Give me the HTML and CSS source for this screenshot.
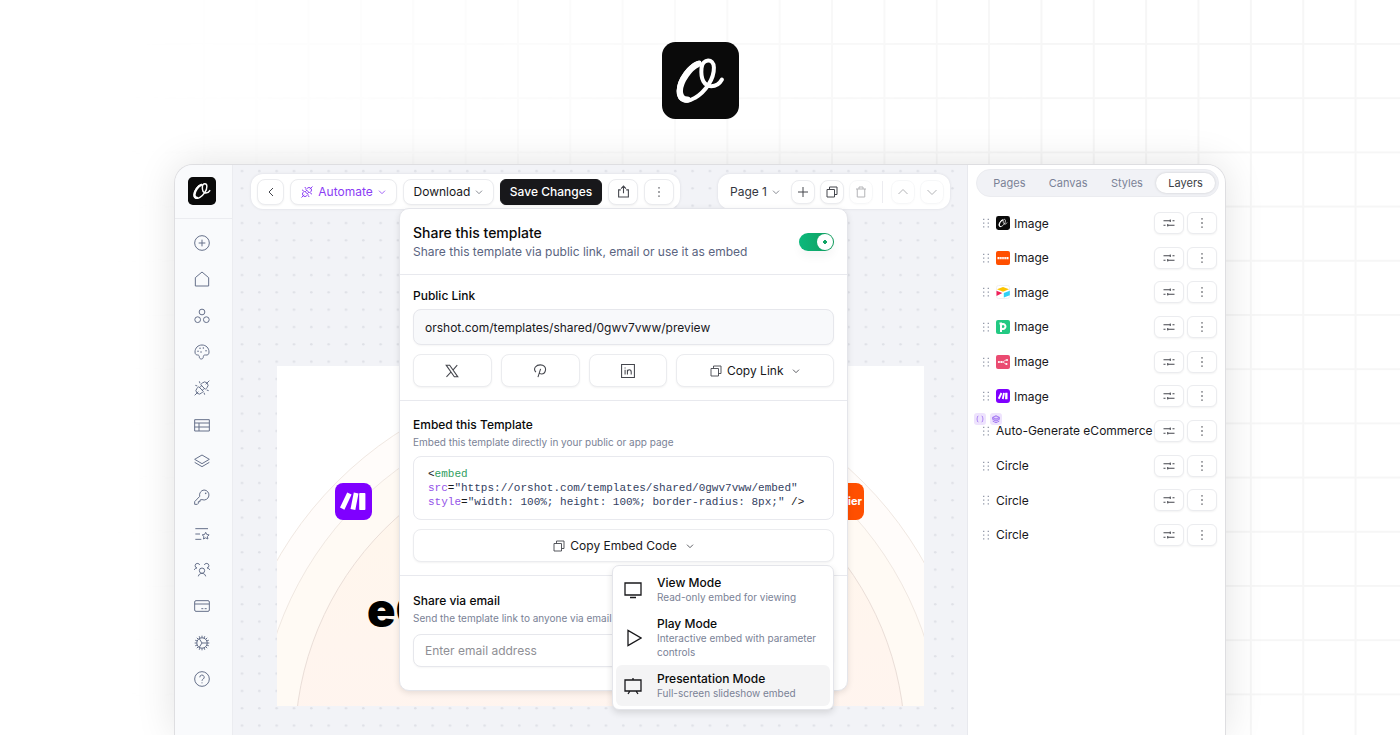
FILE: index.html
```html
<!DOCTYPE html>
<html lang="en">
<head>
    <meta charset="UTF-8">
    <meta name="viewport" content="width=device-width, initial-scale=1.0">
    <title>Orshot | Share this template</title>
    <link rel="stylesheet" href="styles.css">
</head>
<body>

    <!-- Shared icons -->
    <svg class="sprite" viewBox="0 0 24 24">
        <symbol id="orshot" viewBox="0 0 230 230">
            <rect width="230" height="230" rx="40" fill="#0a0a0a"/>
            <g fill="none" stroke="#fff" stroke-linecap="round" stroke-linejoin="round">
                <path stroke-width="12" d="M112 61C84 68 50 112 50 146C50 180 78 180 98 167C130 148 156 110 155 76C154 48 122 48 118 78C115 112 126 131 147 132C164 132 172 125 179 112"/>
                <path stroke-width="19" d="M107 66C84 76 54 115 53 146C53 164 62 172 76 172"/>
            </g>
        </symbol>
        <symbol id="make" viewBox="0 0 37 37">
            <rect width="37" height="37" rx="8" fill="#7f00ff"/>
            <path fill="#fff" d="M12.2 9.4l4.4 2.2-7.2 15.2-4.4-2.2zM18.8 9.6l4.7 1-3.2 16.4-4.8-1zM25 10h4.600a.8.8 0 0 1 .8.800v15.400a.8.8 0 0 1-.8.800H25a.8.8 0 0 1-.8-.800V10.800a.8.8 0 0 1 .8-.800z"/>
        </symbol>
        <symbol id="down" viewBox="0 0 24 24"><path d="M3 8l9 9 9-9"/></symbol>
        <symbol id="up" viewBox="0 0 24 24"><path d="M3 16l9-9 9 9"/></symbol>
        <symbol id="left" viewBox="0 0 24 24"><path d="M16 4l-8 8 8 8"/></symbol>
        <symbol id="more" viewBox="0 0 24 24"><path stroke-width="2.600" d="M12 2.500v2.600M12 10.700v2.600M12 18.900v2.600"/></symbol>
        <symbol id="plus" viewBox="0 0 24 24"><path d="M12 2v20M2 12h20"/></symbol>
        <symbol id="copy" viewBox="0 0 24 24"><path d="M2 7h15v15H2zM7 7V2h15v15h-5"/></symbol>
        <symbol id="upload" viewBox="0 0 24 24"><path d="M7 9H3v13h18V9h-4M12 15V2M7.500 6.500L12 2l4.500 4.500"/></symbol>
        <symbol id="trash" viewBox="0 0 24 24"><path d="M2 6h20M4.500 6v16h15V6M8 6V2h8v4"/></symbol>
        <symbol id="plug" viewBox="0 0 24 24"><path d="M1 23l5.500-5.500M17.500 6.500L23 1M7 10l7 7-2.500 2.500a4.900 4.900 0 0 1-7-7zM10 7l2.500-2.500a4.900 4.900 0 0 1 7 7L17 14zM8.500 11.500l3-3M12.500 15.500l3-3M8 2l1 3M2 8l3 1M22 16l-3-1M16 22l-1-3"/></symbol>
        <symbol id="sliders" viewBox="0 0 24 24"><path d="M1 7.500h14M19 7.500h4M14.500 5v5M1 16.500h4M9 16.500h14M9.500 14v5"/></symbol>
        <symbol id="grip" viewBox="0 0 24 24"><path stroke-width="3" d="M5 3h3M16 3h3M5 12h3M16 12h3M5 21h3M16 21h3"/></symbol>
        <symbol id="stack" viewBox="0 0 24 24"><path d="M12 3l11 6.500L12 16 1 9.500zM1 14l11 6.500L23 14"/></symbol>
    </svg>

    <!-- Faded grid behind the page -->
    <svg class="grid-bg">
        <defs>
            <pattern id="grid" x="674" y="43" width="52.350" height="54.200" patternUnits="userSpaceOnUse">
                <path d="M1 0V54.200M0 1H52.350" fill="none" stroke="#f6f6f6" stroke-width="2"/>
            </pattern>
        </defs>
        <rect width="100%" height="100%" fill="url(#grid)"/>
    </svg>

    <header class="brand">
        <svg class="brand-logo"><use href="#orshot"/></svg>
    </header>

    <main class="window">
        <aside class="sidebar">
            <a class="sidebar-logo" href="#" aria-label="Orshot"><svg><use href="#orshot"/></svg></a>
            <nav class="sidebar-nav">
                <a href="#" aria-label="New"><svg viewBox="0 0 24 24"><circle cx="12" cy="12" r="11"/><path d="M12 7v10M7 12h10"/></svg></a>
                <a href="#" aria-label="Home"><svg viewBox="0 0 24 24"><path d="M2 10L12 1.500 22 10v12.500H2z"/></svg></a>
                <a href="#" aria-label="Apps"><svg viewBox="0 0 24 24"><circle cx="12" cy="6" r="4.300"/><circle cx="5.500" cy="17.500" r="4.300"/><circle cx="18.500" cy="17.500" r="4.300"/></svg></a>
                <a href="#" aria-label="Brand"><svg viewBox="0 0 24 24"><path d="M12 1.500C6 1.500 1.500 6 1.500 12c0 3.500 2 4.500 4 4.500 2 0 2.500 1.500 2.500 3s1 3 3 3 3-1.500 3-3.500 1-2.500 3-2.500h2.500c2 0 3-2 3-4.500 0-6-4.500-10.500-10.500-10.500z"/><path stroke-width="2.200" stroke-linecap="round" d="M6 11h.100M9 6.500h.100M14 6h.100M18 10h.100M10.500 12h.100"/></svg></a>
                <a href="#" aria-label="Integrations"><svg><use href="#plug"/></svg></a>
                <a href="#" aria-label="Tables"><svg viewBox="0 0 24 24"><path d="M1 4h22v17H1zM1 9h22M1 15h22M7.500 9v12"/></svg></a>
                <a href="#" aria-label="Templates"><svg><use href="#stack"/></svg></a>
                <a href="#" aria-label="API keys"><svg viewBox="0 0 24 24"><path d="M15 1.500a7.500 7.500 0 1 1-3 14.400L9 16.500v2.500H6.500v2.500L5 23H1v-4l7.600-8A7.500 7.500 0 0 1 15 1.500z"/><path stroke-width="2.400" stroke-linecap="round" d="M17.500 6.500h.100"/></svg></a>
                <a href="#" aria-label="Activity"><svg viewBox="0 0 24 24"><path d="M2 4h19M2 12h7M2 20h9M17.500 9.500l1.700 3.300 3.500.5-2.600 2.500.7 3.700-3.300-1.800-3.300 1.800.7-3.700-2.600-2.500 3.500-.5z"/></svg></a>
                <a href="#" aria-label="Team"><svg viewBox="0 0 24 24"><circle cx="12" cy="13" r="4"/><path d="M6.500 21.500c1-6 10-6 11 0M.500 12c.5-2 2-3 4-3a3.500 3.500 0 1 1 4-4.500M23.500 12c-.5-2-2-3-4-3a3.500 3.500 0 1 0-4-4.500"/></svg></a>
                <a href="#" aria-label="Billing"><svg viewBox="0 0 24 24"><rect x="1" y="4" width="22" height="16" rx="2"/><path d="M1 9h22M11 16h3M16 16h3"/></svg></a>
                <a href="#" aria-label="Settings"><svg viewBox="0 0 24 24"><circle cx="12" cy="12" r="7.800"/><path d="M12 1v3.200M12 19.800V23M1 12h3.200M12 12h11M4.200 4.200l2.300 2.300M17.500 17.500l2.300 2.300M4.200 19.800l2.300-2.300M17.500 6.500l2.300-2.300M7.500 5l4.500 7-4.500 7M7.800 1.800l1.200 3M16.200 1.800l-1.200 3M7.800 22.200l1.200-3M16.200 22.200l-1.200-3M1.800 7.800l3 1.200M1.800 16.200l3-1.200M22.200 7.800l-3 1.200M22.200 16.200l-3-1.200"/></svg></a>
                <a href="#" aria-label="Help"><svg viewBox="0 0 24 24"><circle cx="12" cy="12" r="11"/><path d="M8.700 9.500a3.300 3.300 0 1 1 5 2.700c-1.200.7-1.700 1.200-1.700 2.500M12 17v1.500"/></svg></a>
            </nav>
        </aside>

        <section class="canvas">
            <svg class="dots">
                <defs>
                    <pattern id="dot" width="17.330" height="17.330" patternUnits="userSpaceOnUse">
                        <circle cx="9" cy="6" r="1.300" fill="#dfe1e7"/>
                    </pattern>
                </defs>
                <rect width="100%" height="100%" fill="url(#dot)"/>
            </svg>

            <div class="bars">
                <div class="bar">
                    <button class="btn" aria-label="Back"><svg><use href="#left"/></svg></button>
                    <button class="btn btn-automate"><svg class="icon-plug"><use href="#plug"/></svg>Automate<svg class="chevron"><use href="#down"/></svg></button>
                    <button class="btn btn-download">Download<svg class="chevron"><use href="#down"/></svg></button>
                    <button class="btn btn-dark">Save Changes</button>
                    <button class="btn btn-wide" aria-label="Share"><svg class="icon-upload"><use href="#upload"/></svg></button>
                    <button class="btn btn-wide" aria-label="More"><svg><use href="#more"/></svg></button>
                </div>
                <div class="bar bar-pages">
                    <button class="page-select">Page 1<svg class="chevron"><use href="#down"/></svg></button>
                    <button class="btn btn-small" aria-label="Add page"><svg class="icon-plug"><use href="#plus"/></svg></button>
                    <button class="btn btn-small" aria-label="Duplicate page"><svg class="icon-plug"><use href="#copy"/></svg></button>
                    <button class="btn btn-small" aria-label="Delete page" disabled><svg><use href="#trash"/></svg></button>
                    <span class="bar-line"></span>
                    <button class="btn btn-small" aria-label="Move up" disabled><svg><use href="#up"/></svg></button>
                    <button class="btn btn-small" aria-label="Move down" disabled><svg><use href="#down"/></svg></button>
                </div>
            </div>

            <svg class="artboard" viewBox="0 0 647 340" preserveAspectRatio="none">
                <defs>
                    <linearGradient id="peach" x1="0" y1="0" x2="0" y2="1">
                        <stop offset="0" stop-color="#fff7ec"/>
                        <stop offset=".5" stop-color="#fff4ef"/>
                    </linearGradient>
                </defs>
                <rect width="647" height="340" fill="#fff"/>
                <g stroke="#f0e8e2">
                    <circle cx="323" cy="379" r="372" fill="#fffcfa"/>
                    <circle cx="323" cy="379" r="342" fill="#fffaf4"/>
                    <circle cx="323" cy="379" r="305" fill="url(#peach)" stroke="#eaded8"/>
                </g>
                <use href="#make" x="58" y="117" width="37" height="37"/>
                <rect x="550" y="117" width="37" height="37" rx="8" fill="#ff4f00"/>
                <text class="art-zapier" x="585" y="139" text-anchor="end">zapier</text>
                <text class="art-title" x="90" y="261">eCommerce</text>
            </svg>

            <div class="popover">
                <div class="popover-head">
                    <div>
                        <h2>Share this template</h2>
                        <label for="share-toggle">Share this template via public link, email or use it as embed</label>
                    </div>
                    <input class="toggle" type="checkbox" id="share-toggle" checked>
                </div>

                <div class="popover-section section-link">
                    <label class="title" for="public-link">Public Link</label>
                    <input class="field field-link" type="text" id="public-link" value="orshot.com/templates/shared/0gwv7vww/preview" readonly>
                    <div class="share-row">
                        <button class="btn btn-tall" aria-label="Share on X"><svg viewBox="0 0 24 24"><path d="M2 2h6l14 20h-6zM2.500 22l8-8.500M13.500 10.500L21 2"/></svg></button>
                        <button class="btn btn-tall" aria-label="Share on Pinterest"><svg viewBox="0 0 24 24"><path d="M8.500 22.500L13 8.500M5 14C-1 7 6 1.500 12.500 1.500S22 6 21.500 10c-.7 5-4 7-7 7-2 0-3.500-1-4-2"/></svg></button>
                        <button class="btn btn-tall" aria-label="Share on LinkedIn"><svg viewBox="0 0 24 24"><path d="M1 1h22v22H1zM7 10v8M7 6v1.500M11 10v8M11 13.500c0-5 6.500-5 6.500 0V18"/></svg></button>
                        <button class="btn btn-tall"><svg class="icon-plug"><use href="#copy"/></svg>Copy Link<svg class="chevron"><use href="#down"/></svg></button>
                    </div>
                </div>

                <div class="popover-section">
                    <h3>Embed this Template</h3>
                    <p>Embed this template directly in your public or app page</p>
                    <pre class="code">&lt;<span class="tag">embed</span>
<span class="attr">src</span>=<span class="string">"https://orshot.com/templates/shared/0gwv7vww/embed"</span>
<span class="attr">style</span>=<span class="string">"width: 100%; height: 100%; border-radius: 8px;"</span> /&gt;</pre>
                    <div class="dropdown">
                        <button class="btn btn-tall"><svg class="icon-plug"><use href="#copy"/></svg>Copy Embed Code<svg class="chevron"><use href="#down"/></svg></button>
                        <div class="menu">
                            <button class="menu-item">
                                <svg viewBox="0 0 18 18"><path d="M1 2h16v12H1zM6 16.500h6"/></svg>
                                <span><strong>View Mode</strong><small>Read-only embed for viewing</small></span>
                            </button>
                            <button class="menu-item">
                                <svg viewBox="0 0 18 18"><path d="M4 1.500v15L17 9z"/></svg>
                                <span><strong>Play Mode</strong><small>Interactive embed with parameter controls</small></span>
                            </button>
                            <button class="menu-item active">
                                <svg viewBox="0 0 18 18"><path d="M1 3h16v11H1zM9 1v2M6 14l-2 3M12 14l2 3"/></svg>
                                <span><strong>Presentation Mode</strong><small>Full-screen slideshow embed</small></span>
                            </button>
                        </div>
                    </div>
                </div>

                <div class="popover-section section-email">
                    <label class="title" for="email">Share via email</label>
                    <p>Send the template link to anyone via email</p>
                    <input class="field" type="email" id="email" placeholder="Enter email address">
                </div>
            </div>
        </section>

        <aside class="panel">
            <div class="tabs">
                <button>Pages</button>
                <button>Canvas</button>
                <button>Styles</button>
                <button class="active">Layers</button>
            </div>
            <ul class="layers">
                <li>
                    <svg class="grip"><use href="#grip"/></svg>
                    <svg class="thumb"><use href="#orshot"/></svg>
                    <span>Image</span>
                    <button class="btn" aria-label="Adjust"><svg><use href="#sliders"/></svg></button>
                    <button class="btn" aria-label="More"><svg><use href="#more"/></svg></button>
                </li>
                <li>
                    <svg class="grip"><use href="#grip"/></svg>
                    <svg class="thumb" viewBox="0 0 14 14"><rect width="14" height="14" rx="2" fill="#ff4f00"/><path d="M1.500 7.200h11" fill="none" stroke="#fff" stroke-width="2.200" stroke-dasharray="1.500 .400"/></svg>
                    <span>Image</span>
                    <button class="btn" aria-label="Adjust"><svg><use href="#sliders"/></svg></button>
                    <button class="btn" aria-label="More"><svg><use href="#more"/></svg></button>
                </li>
                <li>
                    <svg class="grip"><use href="#grip"/></svg>
                    <svg class="thumb" viewBox="0 0 14 14"><rect x=".5" y=".5" width="13" height="13" rx="2" fill="#fff" stroke="#f0f0f2"/><path fill="#fcc400" d="M1 4.300l6-2.300 6 2.300-6 2.400z"/><path fill="#2fd0f5" d="M7.800 8l6-2.300v4.500l-6 2.300z"/><path fill="#f0205a" d="M.500 5.700L6.300 8 .5 11z"/></svg>
                    <span>Image</span>
                    <button class="btn" aria-label="Adjust"><svg><use href="#sliders"/></svg></button>
                    <button class="btn" aria-label="More"><svg><use href="#more"/></svg></button>
                </li>
                <li>
                    <svg class="grip"><use href="#grip"/></svg>
                    <svg class="thumb" viewBox="0 0 14 14"><rect width="14" height="14" rx="2" fill="#23c983"/><path d="M3.500 3.500H5V12M5.200 5a2.400 2.400 0 1 1 0 3" fill="none" stroke="#fff" stroke-width="2"/></svg>
                    <span>Image</span>
                    <button class="btn" aria-label="Adjust"><svg><use href="#sliders"/></svg></button>
                    <button class="btn" aria-label="More"><svg><use href="#more"/></svg></button>
                </li>
                <li>
                    <svg class="grip"><use href="#grip"/></svg>
                    <svg class="thumb" viewBox="0 0 14 14"><rect width="14" height="14" rx="2" fill="#ea4b71"/><path d="M3 7h4M7 7c1.500 0 1-2 3-2M7 7c1.500 0 1 2 3 2" fill="none" stroke="#fff" stroke-width=".8"/><g fill="#fff"><circle cx="2.800" cy="7" r="1"/><circle cx="5.500" cy="7" r="1"/><circle cx="11" cy="5" r="1"/><circle cx="10.500" cy="9" r="1"/></g></svg>
                    <span>Image</span>
                    <button class="btn" aria-label="Adjust"><svg><use href="#sliders"/></svg></button>
                    <button class="btn" aria-label="More"><svg><use href="#more"/></svg></button>
                </li>
                <li>
                    <svg class="grip"><use href="#grip"/></svg>
                    <svg class="thumb"><use href="#make"/></svg>
                    <span>Image</span>
                    <button class="btn" aria-label="Adjust"><svg><use href="#sliders"/></svg></button>
                    <button class="btn" aria-label="More"><svg><use href="#more"/></svg></button>
                </li>
                <li>
                    <div class="badges">
                        <svg viewBox="0 0 24 24"><path d="M8 5c-4 0-1 6-4 7 3 1 0 7 4 7M16 5c4 0 1 6 4 7-3 1 0 7-4 7"/></svg>
                        <svg viewBox="0 0 24 24"><path fill="#c9adf8" d="M12 4l8 4-8 4-8-4zM4 8v5l8 4 8-4V8"/><path d="M4 17l8 4 8-4"/></svg>
                    </div>
                    <svg class="grip"><use href="#grip"/></svg>
                    <span>Auto-Generate eCommerce</span>
                    <button class="btn" aria-label="Adjust"><svg><use href="#sliders"/></svg></button>
                    <button class="btn" aria-label="More"><svg><use href="#more"/></svg></button>
                </li>
                <li>
                    <svg class="grip"><use href="#grip"/></svg>
                    <span>Circle</span>
                    <button class="btn" aria-label="Adjust"><svg><use href="#sliders"/></svg></button>
                    <button class="btn" aria-label="More"><svg><use href="#more"/></svg></button>
                </li>
                <li>
                    <svg class="grip"><use href="#grip"/></svg>
                    <span>Circle</span>
                    <button class="btn" aria-label="Adjust"><svg><use href="#sliders"/></svg></button>
                    <button class="btn" aria-label="More"><svg><use href="#more"/></svg></button>
                </li>
                <li>
                    <svg class="grip"><use href="#grip"/></svg>
                    <span>Circle</span>
                    <button class="btn" aria-label="Adjust"><svg><use href="#sliders"/></svg></button>
                    <button class="btn" aria-label="More"><svg><use href="#more"/></svg></button>
                </li>
            </ul>
        </aside>
    </main>

</body>
</html>
```
FILE: styles.css
```css
* {
    box-sizing: border-box;
}
body {
    margin: 0;
    height: 100vh;
    display: flex;
    flex-direction: column;
    overflow: hidden;
    background: #fff;
    color: #18181b;
    font-family: Inter, "Liberation Sans", sans-serif;
    font-size: 12px;
}
h2, h3, p, ul, pre {
    margin: 0;
    padding: 0;
}
button, input {
    font: inherit;
    color: inherit;
}
svg {
    display: block;
    flex: none;
}
.sprite {
    position: absolute;
    width: 0;
    height: 0;
}
.grid-bg {
    position: absolute;
    top: 0;
    left: 0;
    z-index: -1;
    width: 100%;
    height: 100%;
    -webkit-mask-image: linear-gradient(to right, transparent 8%, #000 75%);
    mask-image: linear-gradient(to right, transparent 8%, #000 75%);
}
.brand {
    display: flex;
    justify-content: center;
    padding: 42px 0 46px;
}
.brand-logo {
    width: 77px;
    height: 77px;
}

/* Editor window */
.window {
    flex: 1;
    min-height: 0;
    width: 75%;
    margin: 0 auto;
    display: grid;
    grid-template-columns: 58px 1fr 258px;
    background: #f2f3f7;
    border-radius: 18px 18px 0 0;
    box-shadow: 0 0 0 1px #dedee1, 0 0 40px rgba(0, 0, 0, 0.12);
}
.sidebar {
    display: flex;
    flex-direction: column;
    background: #f9fafc;
    border-right: 1px solid #ebecf0;
    border-radius: 18px 0 0 0;
}
.sidebar-logo {
    display: flex;
    justify-content: center;
    padding: 12px 4px 13px 0;
    border-bottom: 1px solid #ebecf0;
}
.sidebar-logo svg {
    width: 28px;
    height: 28px;
}
.sidebar-nav {
    flex: 1;
    display: flex;
    flex-direction: column;
    align-items: center;
    justify-content: space-between;
    padding: 16px 4px 48px 0;
}
.sidebar-nav svg {
    width: 16px;
    height: 16px;
    fill: none;
    stroke: #66708a;
    stroke-width: 1.5;
}

/* Buttons */
.btn {
    display: flex;
    align-items: center;
    justify-content: center;
    height: 26px;
    width: 27px;
    padding: 0;
    background: #fff;
    border: 1px solid #ebecef;
    border-radius: 8px;
    box-shadow: 0 1px 2px rgba(0, 0, 0, 0.05);
    white-space: nowrap;
    cursor: pointer;
}
.btn svg {
    width: 12px;
    height: 12px;
    fill: none;
    stroke: #44464d;
    stroke-width: 2;
}
.btn:disabled {
    opacity: 0.4;
}
.btn .icon-plug {
    width: 12px;
    height: 12px;
    margin-right: 5px;
}
.btn .icon-upload {
    width: 13px;
    height: 13px;
}
.btn .chevron,
.page-select .chevron {
    width: 8px;
    height: 8px;
    margin-left: 5px;
    fill: none;
    stroke: #6b6e78;
    stroke-width: 2.4;
}
.btn-automate {
    width: 107px;
    color: #8b3df5;
}
.btn.btn-automate svg {
    stroke: #8b3df5;
}
.btn-download {
    width: 91px;
}
.btn-dark {
    width: 102px;
    background: #18181b;
    border-color: #18181b;
    color: #fff;
    font-weight: 500;
    border-radius: 6px;
}
.btn-wide {
    width: 30px;
}
.btn-small {
    width: 24px;
    height: 24px;
}
.btn.btn-small .icon-plug {
    margin: 0;
}
.btn-tall {
    width: 100%;
    height: 33px;
}
.btn.btn-tall svg {
    stroke-width: 1.8;
}
.btn-tall:not(:has(.chevron)) svg {
    width: 14px;
    height: 14px;
}
.btn.btn-tall .chevron {
    margin-left: 9px;
    stroke: #44464d;
    stroke-width: 2.6;
}

/* Canvas */
.canvas {
    position: relative;
    min-width: 0;
}
.dots {
    position: absolute;
    top: 0;
    left: 0;
    width: 100%;
    height: 100%;
}
.bars {
    position: relative;
    display: flex;
    justify-content: space-between;
    padding: 9px 17px 0 18px;
}
.bar {
    display: flex;
    align-items: center;
    gap: 6px;
    height: 35px;
    padding: 0 6px;
    background: #fff;
    border-radius: 12px;
    box-shadow: 0 0 3px rgba(20, 20, 50, 0.1);
}
.bar-pages {
    gap: 5px;
}
.page-select {
    display: flex;
    align-items: center;
    margin-right: 6px;
    padding: 0 0 0 6px;
    background: none;
    border: 0;
    color: #33363f;
}
.bar-line {
    width: 1px;
    height: 22px;
    margin: 0 3px 0 4px;
    background: #ececf0;
}
.artboard {
    position: relative;
    width: calc(100% - 87px);
    height: 340px;
    margin: 157px 43px 0 44px;
}
.art-title {
    font-size: 47px;
    font-weight: 900;
}
.art-zapier {
    font-size: 11px;
    font-weight: 700;
    fill: #fff;
}

/* Share popover */
.popover {
    position: absolute;
    top: 43px;
    left: 166px;
    width: 449px;
    background: #fff;
    border: 1px solid #e4e5ea;
    border-radius: 10px;
    box-shadow: 0 2px 6px rgba(0, 0, 0, 0.1);
}
.popover-head {
    display: flex;
    align-items: center;
    justify-content: space-between;
    padding: 14px 13px 13px;
    line-height: 19px;
    color: #5a6480;
}
.popover-head label {
    display: block;
}
.popover h2 {
    font-size: 14px;
    font-weight: 500;
    color: #0a0a0a;
}
.toggle {
    appearance: none;
    width: 35px;
    height: 18px;
    margin: 0;
    padding: 1px;
    border-radius: 9px;
    background: linear-gradient(to right, #0bb97c, #129a5c);
    box-shadow: 0 6px 10px rgba(0, 0, 0, 0.04);
}
.toggle::before {
    content: "";
    display: block;
    width: 16px;
    height: 16px;
    margin-left: auto;
    border-radius: 50%;
    background: radial-gradient(circle, #12a566 2px, #fff 2px);
}
.popover-section {
    padding: 15px 13px 13px;
    border-top: 1px solid #e8e9ee;
}
.popover h3,
.title {
    display: block;
    font-size: 12px;
    font-weight: 500;
    line-height: 18px;
    color: #0a0a0a;
}
.popover p {
    font-size: 10px;
    line-height: 16px;
    color: #7a8296;
}
.section-link {
    padding-top: 12px;
}
.field {
    display: block;
    width: 100%;
    height: 33px;
    margin-top: 8px;
    padding: 0 11px;
    border: 1px solid #e6e7ec;
    border-radius: 8px;
    background: #fff;
    box-shadow: 0 1px 2px rgba(0, 0, 0, 0.04);
}
.field::placeholder {
    color: #8f8f95;
}
.field-link {
    height: 36px;
    margin-top: 4px;
    background: #f8f9fb;
}
.share-row {
    display: grid;
    grid-template-columns: repeat(3, 1fr) 2fr;
    gap: 9px;
    margin-top: 9px;
}
.code {
    margin: 6px 0 9px;
    padding: 10px 14px;
    border: 1px solid #e8e9ee;
    border-radius: 8px;
    font-family: "Liberation Mono", monospace;
    font-size: 11px;
    line-height: 14px;
}
.tag {
    color: #2f9e5f;
}
.attr {
    color: #9353e8;
}
.string {
    color: #33415f;
}
.section-email {
    padding-top: 16px;
    padding-bottom: 23px;
}
.dropdown {
    position: relative;
}
.menu {
    position: absolute;
    top: calc(100% + 3px);
    right: 0;
    width: 222px;
    padding: 3px;
    background: #fff;
    border: 1px solid #e4e5ea;
    border-radius: 7px;
    box-shadow: 0 3px 7px rgba(0, 0, 0, 0.12);
}
.menu-item {
    display: flex;
    align-items: center;
    gap: 15px;
    width: 100%;
    padding: 6px 8px;
    background: none;
    border: 0;
    border-radius: 6px;
    text-align: left;
    color: #0a0a0a;
}
.menu-item.active {
    background: #f4f4f5;
}
.menu-item svg {
    width: 18px;
    height: 18px;
    fill: none;
    stroke: #18181b;
    stroke-width: 1.3;
}
.menu-item strong,
.menu-item small {
    display: block;
}
.menu-item strong {
    font-weight: 500;
    line-height: 15px;
}
.menu-item small {
    font-size: 10px;
    line-height: 14px;
    color: #7a8296;
}

/* Layers panel */
.panel {
    display: flex;
    flex-direction: column;
    padding: 4px 6px 0 8px;
    background: #fff;
    border-left: 1px solid #e8e9ee;
    border-radius: 0 18px 0 0;
}
.tabs {
    display: grid;
    grid-template-columns: repeat(4, 1fr);
    height: 28px;
    padding: 3px;
    background: #f1f2f6;
    border: 1px solid #ebecf0;
    border-radius: 14px;
}
.tabs button {
    padding: 0;
    background: none;
    border: 0;
    border-radius: 10px;
    font-size: 11px;
    color: #7b8296;
}
.tabs .active {
    background: #fff;
    color: #3c3e46;
    box-shadow: 0 0 3px rgba(0, 0, 0, 0.16);
}
.layers {
    flex: 1;
    display: flex;
    flex-direction: column;
    justify-content: space-between;
    padding: 15px 2px 189px 5px;
    list-style: none;
}
.layers li {
    position: relative;
    display: flex;
    align-items: center;
}
.layers span {
    flex: 1;
    min-width: 0;
    white-space: nowrap;
}
.layers .btn {
    flex: none;
    width: 30px;
    height: 22px;
    margin-left: 3px;
    border-radius: 6px;
}
.grip {
    width: 10px;
    height: 10px;
    margin-right: 5px;
    stroke: #8d93a3;
}
.thumb {
    width: 14px;
    height: 14px;
    margin-right: 4px;
}
.badges {
    position: absolute;
    top: -7px;
    left: -7px;
    display: flex;
    gap: 4px;
}
.badges svg {
    width: 12px;
    height: 12px;
    padding: 1px;
    border-radius: 3px;
    background: #eee3fd;
    fill: none;
    stroke: #9a6cf0;
    stroke-width: 2;
}
```
